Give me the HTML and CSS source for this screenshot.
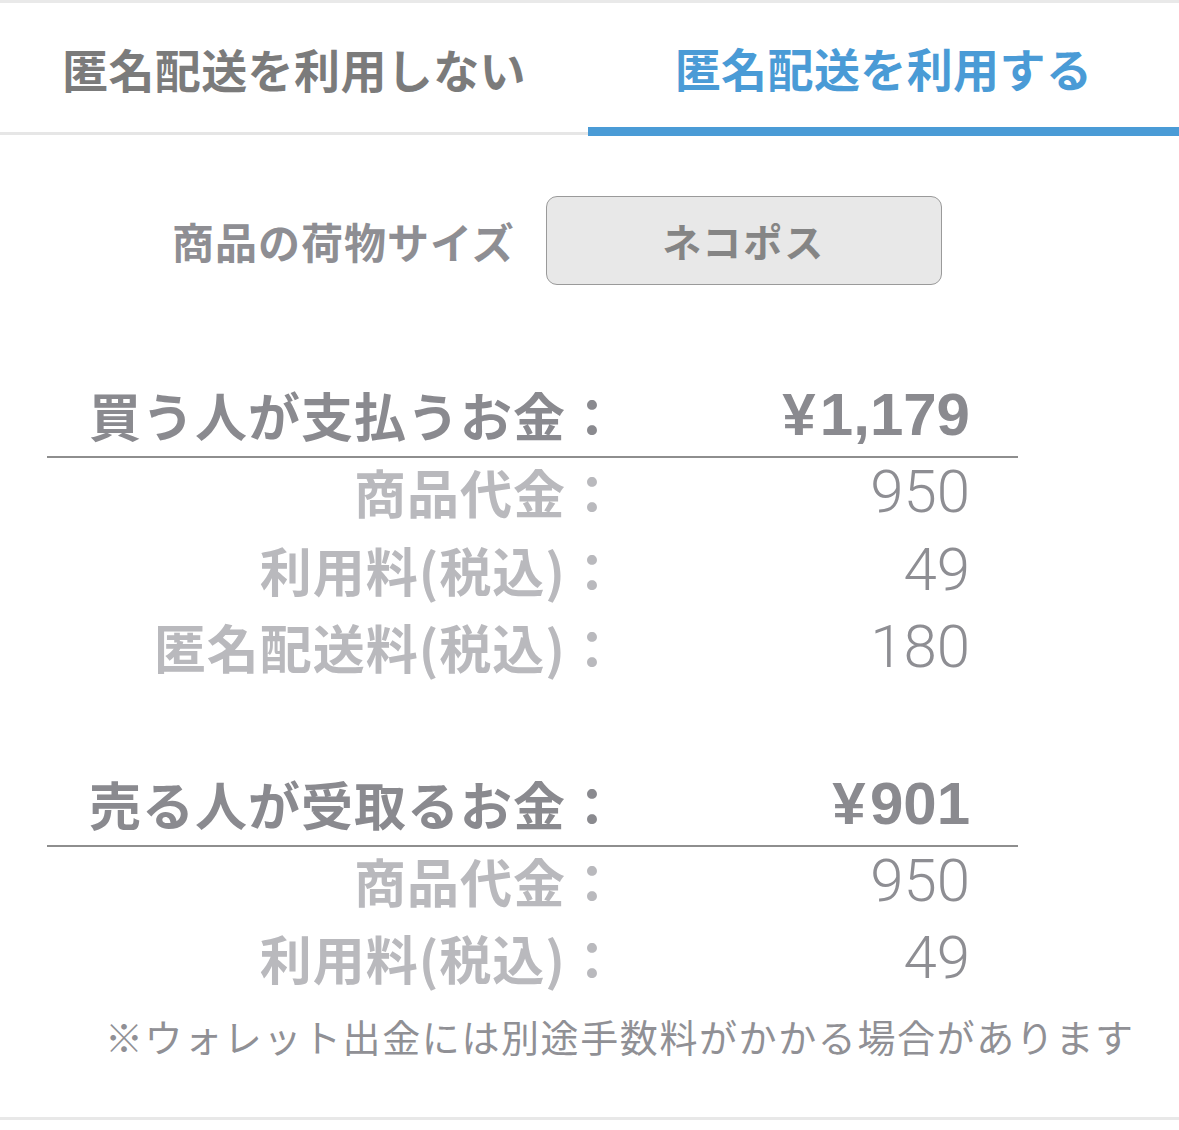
FILE: index.html
```html
<!DOCTYPE html>
<html lang="ja">
<head>
<meta charset="utf-8">
<title>匿名配送</title>
<link rel="stylesheet" href="styles.css">
</head>
<body>
<div class="screen">
  <nav class="tabs">
    <div class="tab">匿名配送を利用しない</div>
    <div class="tab tab-active">匿名配送を利用する</div>
  </nav>

  <div class="size-row">
    <span class="size-label">商品の荷物サイズ</span>
    <div class="size-button">ネコポス</div>
  </div>

  <section class="breakdown breakdown-buyer">
    <div class="total-row">
      <span class="label">買う人が支払うお金：</span>
      <span class="amount"><span class="yen">¥</span>1,179</span>
    </div>
    <div class="items">
      <span class="label">商品代金：</span><span class="amount">950</span>
      <span class="label">利用料(税込)：</span><span class="amount">49</span>
      <span class="label">匿名配送料(税込)：</span><span class="amount">180</span>
    </div>
  </section>

  <section class="breakdown breakdown-seller">
    <div class="total-row">
      <span class="label">売る人が受取るお金：</span>
      <span class="amount"><span class="yen">¥</span>901</span>
    </div>
    <div class="items">
      <span class="label">商品代金：</span><span class="amount">950</span>
      <span class="label">利用料(税込)：</span><span class="amount">49</span>
    </div>
  </section>

  <p class="note">※ウォレット出金には別途手数料がかかる場合があります</p>
</div>
</body>
</html>
```

FILE: styles.css
```css
body {
  margin: 0;
  background: #fff;
  font-family: "Noto Sans CJK JP", "Noto Sans", sans-serif;
}

.screen {
  width: 1179px;
  border-top: 3px solid #e9e9e9;
  border-bottom: 3px solid #e8e8e8;
}

/* tab bar */
.tabs {
  display: grid;
  grid-template-columns: 588px 1fr;
  align-items: start;
  height: 133px;
}

.tab {
  box-sizing: border-box;
  height: 132px;
  border-bottom: 3px solid #e6e6e6;
  display: flex;
  align-items: center;
  justify-content: center;
  font-size: 46px;
  font-weight: 700;
  line-height: 1;
  letter-spacing: 0.4px;
  color: #7b7b7b;
}

.tab-active {
  height: 133px;
  padding-top: 4px;
  border-bottom: 9px solid #4a9bd6;
  color: #4a9bd6;
}

/* parcel size */
.size-row {
  display: flex;
  align-items: center;
  gap: 31px;
  padding-left: 172px;
  margin-top: 60px;
}

.size-label {
  font-size: 42px;
  font-weight: 700;
  line-height: 1;
  letter-spacing: 1px;
  color: #8e8e93;
}

.size-button {
  box-sizing: border-box;
  width: 396px;
  height: 89px;
  border: 1.5px solid #9a9a9a;
  border-radius: 11px;
  background: #e8e8e8;
  display: flex;
  align-items: center;
  justify-content: center;
  font-size: 39px;
  font-weight: 700;
  line-height: 1;
  letter-spacing: 2px;
  color: #858585;
}

/* price breakdown */
.breakdown {
  margin-left: 47px;
  width: 971px;
}

.breakdown-buyer {
  margin-top: 92px;
}

.breakdown-seller {
  margin-top: 87.5px;
}

.total-row,
.items {
  display: grid;
  grid-template-columns: 572px 351px;
}

.total-row {
  line-height: 76px;
  padding-bottom: 3px;
  border-bottom: 2px solid #8e8e8e;
}

.items {
  line-height: 62px;
  row-gap: 15.5px;
  padding-top: 3px;
}

.label {
  text-align: right;
  font-size: 52px;
  font-weight: 700;
  letter-spacing: 1px;
  white-space: nowrap;
}

.amount {
  text-align: right;
  font-family: "Liberation Sans", Arial, sans-serif;
  font-size: 60px;
}

.total-row .label {
  color: #8a8a8f;
}

.total-row .amount {
  font-weight: 700;
  color: #8a8a8f;
}

.yen {
  display: inline-block;
  width: 42px;
  text-align: center;
}

.items .label {
  color: #b9b9bd;
}

.items .amount {
  font-family: Roboto, "Liberation Sans", sans-serif;
  font-weight: 300;
  color: #8e8e93;
}

.note {
  margin: 21.5px 0 56px;
  padding-left: 105px;
  font-size: 38px;
  font-weight: 400;
  line-height: 50px;
  letter-spacing: 1.6px;
  color: #909095;
  white-space: nowrap;
}
```
